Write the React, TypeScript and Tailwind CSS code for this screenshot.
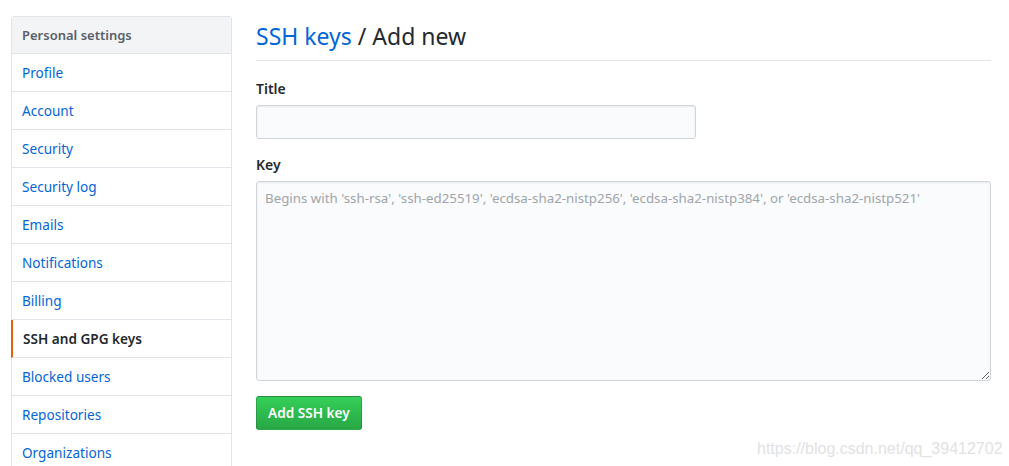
import React from "react";

const items = [
  "Profile",
  "Account",
  "Security",
  "Security log",
  "Emails",
  "Notifications",
  "Billing",
  "SSH and GPG keys",
  "Blocked users",
  "Repositories",
  "Organizations",
];

export default function App() {
  return (
    <div
      className="relative w-[1009px] h-[466px] overflow-hidden bg-white"
      style={{ fontFamily: '"Noto Sans", "Open Sans", sans-serif' }}
    >
      <div className="flex pt-4 pl-[11px]">
        <div className="w-[221px] shrink-0 border border-[#e1e4e8] rounded-t-[3px] self-start">
          <div className="h-[37px] bg-[#f3f4f6] border-b border-[#e1e4e8] flex items-center px-[10px] pt-[2px] text-[13px] font-semibold text-[#586069]">
            Personal settings
          </div>
          {items.map((it) => {
            const active = it === "SSH and GPG keys";
            return (
              <div
                key={it}
                className={
                  active
                    ? "h-[38px] border-b border-[#e1e4e8] flex items-center pl-[8px] pt-[2px] border-l-2 border-l-[#e36209] -ml-px text-[13.6px] font-semibold text-[#24292e]"
                    : "h-[38px] border-b border-[#e1e4e8] flex items-center px-[10px] pt-[2px] text-[13.6px] text-[#0366d6]"
                }
              >
                <span className={active ? "pl-[2px]" : ""}>{it}</span>
              </div>
            );
          })}
        </div>
        <div className="ml-[24px] w-[735px] shrink-0">
          <div className="border-b border-[#e1e4e8] h-[45px] flex items-end pb-[9px]">
            <h2 className="text-[23px] leading-[30px] font-normal text-[#24292e]">
              <span className="text-[#0366d6]">SSH keys</span> / Add new
            </h2>
          </div>
          <div className="mt-[18px] text-[14px] font-semibold text-[#24292e] leading-[20px]">Title</div>
          <div className="mt-[6px] w-[440px] h-[34px] bg-[#fafbfc] border border-[#d1d5da] rounded-[3px] shadow-[inset_0_1px_2px_rgba(27,31,35,0.075)]" />
          <div className="mt-[16px] text-[14px] font-semibold text-[#24292e] leading-[20px]">Key</div>
          <textarea
            className="mt-[6px] block w-[735px] h-[200px] bg-[#fafbfc] border border-[#d1d5da] rounded-[3px] px-[8px] py-[6px] text-[13.3px] leading-[20px] text-[#24292e] placeholder:text-[#a0a5ab] shadow-[inset_0_1px_2px_rgba(27,31,35,0.075)] outline-none"
            placeholder="Begins with 'ssh-rsa', 'ssh-ed25519', 'ecdsa-sha2-nistp256', 'ecdsa-sha2-nistp384', or 'ecdsa-sha2-nistp521'"
            style={{ fontFamily: '"Noto Sans", "Open Sans", sans-serif' }}
          />
          <button className="mt-[15px] h-[34px] px-[11px] rounded-[3px] border border-[rgba(27,31,35,0.2)] bg-gradient-to-b from-[#34d058] to-[#28a745] text-white text-[13.6px] font-semibold">
            Add SSH key
          </button>
        </div>
      </div>
      <div
        className="absolute left-[757px] top-[437px] text-[16px] text-[#e2e2e2] whitespace-nowrap"
        style={{ fontFamily: '"Liberation Sans", Arial, sans-serif' }}
      >
        https://blog.csdn.net/qq_39412702
      </div>
    </div>
  );
}
